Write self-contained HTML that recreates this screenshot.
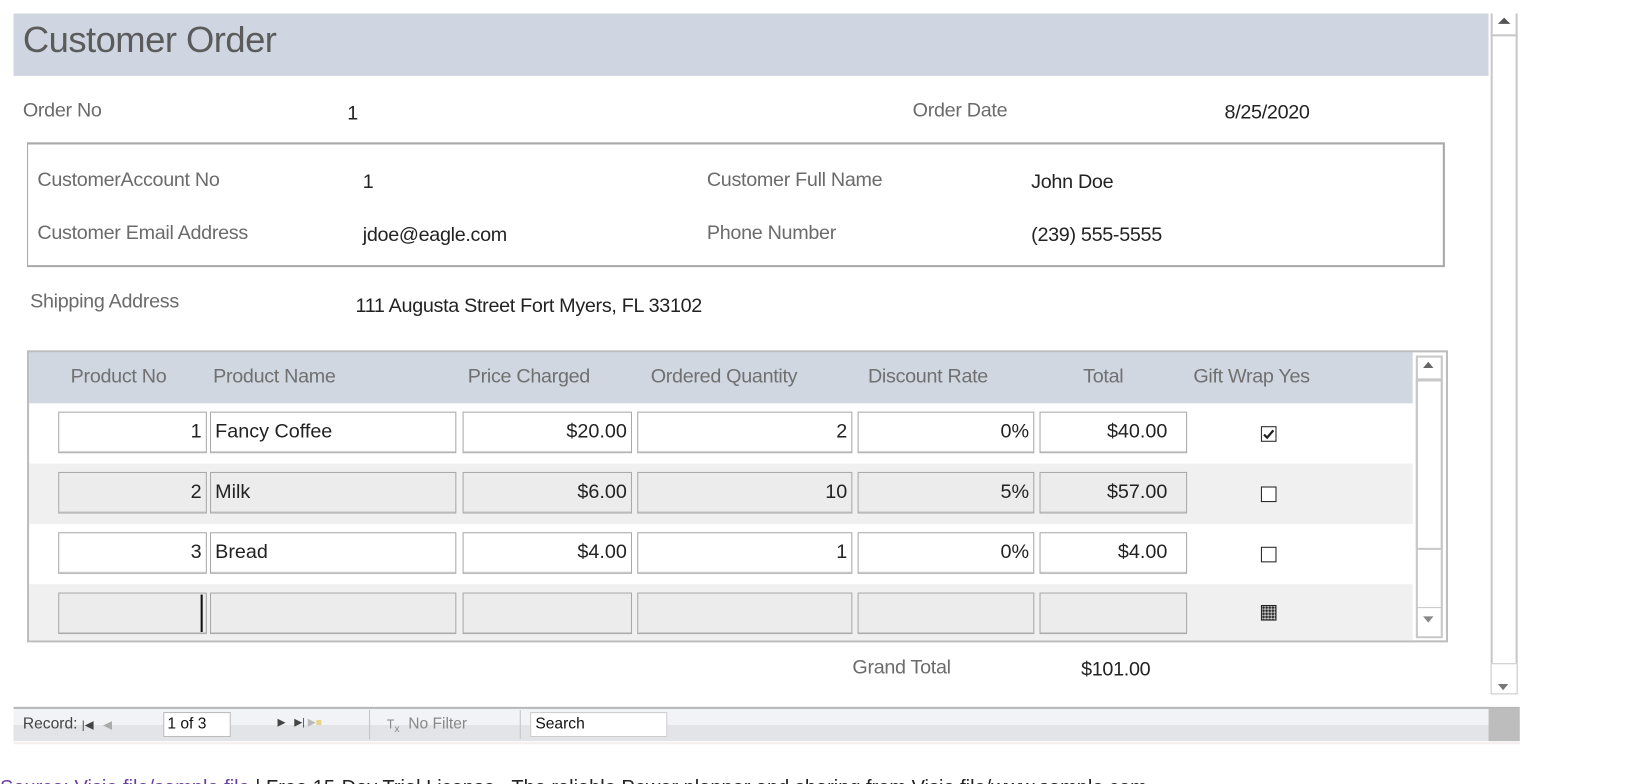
<!DOCTYPE html>
<html><head><meta charset="utf-8"><style>
body{margin:0;width:1630px;height:784px;overflow:hidden;background:#fff;font-family:"Liberation Sans",sans-serif;position:relative}
#w{position:absolute;left:0;top:0;width:1568px;height:754px;transform:scale(1.0395);transform-origin:0 0}
.a{position:absolute;white-space:nowrap}
.lbl{color:#6b6b6b;font-size:19px;letter-spacing:-0.3px}
.val{color:#222;font-size:19px;letter-spacing:-0.3px}
.hd{color:#707070;font-size:19px;letter-spacing:-0.3px}
.f{position:absolute;height:40px;border:1px solid #a9a9a9;box-shadow:inset 0 -1px 0 #ccc;box-sizing:border-box;font-size:19px;color:#222;line-height:38px;padding:0 4px}
.r{text-align:right}
.cb{position:absolute;width:13px;height:13px;border:1.5px solid #222;background:#fff}
</style></head><body>
<div id="w">
<div class="a" style="left:13px;top:13px;width:1419px;height:60px;background:#cfd6e1"></div>
<div class="a" style="left:22px;top:19px;font-size:35px;color:#5b5b5b;letter-spacing:-0.5px">Customer Order</div>
<div class="a" style="left:1434px;top:13px;width:26px;height:654px;border-left:2px solid #c8c8c8;border-right:2px solid #c8c8c8;box-sizing:border-box"></div>
<div class="a" style="left:1434px;top:33px;width:26px;border-top:2px solid #c8c8c8"></div>
<div class="a" style="left:1441px;top:17px;width:0;height:0;border-left:6px solid transparent;border-right:6px solid transparent;border-bottom:6px solid #555"></div>
<div class="a" style="left:1434px;top:638px;width:26px;height:30px;border:1px solid #c8c8c8;box-sizing:border-box;background:#fff"></div>
<div class="a" style="left:1441px;top:658px;width:0;height:0;border-left:5px solid transparent;border-right:5px solid transparent;border-top:6px solid #777"></div>

<div class="a lbl" style="left:22px;top:96px">Order No</div>
<div class="a val" style="left:334px;top:99px">1</div>
<div class="a lbl" style="left:878px;top:96px">Order Date</div>
<div class="a val" style="left:1178px;top:98px">8/25/2020</div>

<div class="a" style="left:26px;top:137px;width:1364px;height:120px;border:2px solid #a8a8a8;border-left-width:1px;box-sizing:border-box"></div>
<div class="a lbl" style="left:36px;top:163px">CustomerAccount No</div>
<div class="a val" style="left:349px;top:165px">1</div>
<div class="a lbl" style="left:680px;top:163px">Customer Full Name</div>
<div class="a val" style="left:992px;top:165px">John Doe</div>
<div class="a lbl" style="left:36px;top:214px">Customer Email Address</div>
<div class="a val" style="left:349px;top:216px">jdoe@eagle.com</div>
<div class="a lbl" style="left:680px;top:214px">Phone Number</div>
<div class="a val" style="left:992px;top:216px">(239) 555-5555</div>

<div class="a lbl" style="left:29px;top:280px">Shipping Address</div>
<div class="a val" style="left:342px;top:284px">111 Augusta Street Fort Myers, FL 33102</div>

<div class="a" style="left:26px;top:337px;width:1367px;height:281px;border:2px solid #bdbdbd;box-sizing:border-box"></div>
<div class="a" style="left:28px;top:339px;width:1331px;height:49px;background:#d0d7e1"></div>
<div class="a" style="left:28px;top:446px;width:1331px;height:58px;background:#f0f0f0"></div>
<div class="a" style="left:28px;top:562px;width:1331px;height:54px;background:#f0f0f0"></div>
<div class="a hd" style="left:68px;top:352px">Product No</div>
<div class="a hd" style="left:205px;top:352px">Product Name</div>
<div class="a hd" style="left:450px;top:352px">Price Charged</div>
<div class="a hd" style="left:626px;top:352px">Ordered Quantity</div>
<div class="a hd" style="left:835px;top:352px">Discount Rate</div>
<div class="a hd" style="left:1042px;top:352px">Total</div>
<div class="a hd" style="left:1148px;top:352px">Gift Wrap Yes</div>
<div class="a" style="left:1362px;top:342px;width:26px;height:272px;border:2px solid #c8c8c8;box-sizing:border-box;background:#fff"></div>
<div class="a" style="left:1362px;top:364px;width:26px;height:165px;border:2px solid #c8c8c8;border-top-width:3px;box-sizing:border-box"></div>
<div class="a" style="left:1369px;top:348px;width:0;height:0;border-left:5px solid transparent;border-right:5px solid transparent;border-bottom:6px solid #666"></div>
<div class="a" style="left:1362px;top:584px;width:26px;border-top:1px solid #c8c8c8"></div>
<div class="a" style="left:1369px;top:593px;width:0;height:0;border-left:5px solid transparent;border-right:5px solid transparent;border-top:6px solid #888"></div>

<div class="f r" style="left:56px;top:396px;width:143px;background:#fff">1</div>
<div class="f" style="left:202px;top:396px;width:237px;background:#fff">Fancy Coffee</div>
<div class="f r" style="left:445px;top:396px;width:163px;background:#fff">$20.00</div>
<div class="f r" style="left:613px;top:396px;width:207px;background:#fff">2</div>
<div class="f r" style="left:825px;top:396px;width:170px;background:#fff">0%</div>
<div class="f r" style="left:1000px;top:396px;width:142px;background:#fff;padding-right:18px">$40.00</div>
<div class="cb" style="left:1213px;top:410px"></div>
<svg class="a" style="left:1213px;top:410px" width="16" height="16"><path d="M3 8 L6 11 L12 4" stroke="#222" stroke-width="2.2" fill="none"/></svg>
<div class="f r" style="left:56px;top:454px;width:143px;background:#ececec">2</div>
<div class="f" style="left:202px;top:454px;width:237px;background:#ececec">Milk</div>
<div class="f r" style="left:445px;top:454px;width:163px;background:#ececec">$6.00</div>
<div class="f r" style="left:613px;top:454px;width:207px;background:#ececec">10</div>
<div class="f r" style="left:825px;top:454px;width:170px;background:#ececec">5%</div>
<div class="f r" style="left:1000px;top:454px;width:142px;background:#ececec;padding-right:18px">$57.00</div>
<div class="cb" style="left:1213px;top:468px"></div>
<div class="f r" style="left:56px;top:512px;width:143px;background:#fff">3</div>
<div class="f" style="left:202px;top:512px;width:237px;background:#fff">Bread</div>
<div class="f r" style="left:445px;top:512px;width:163px;background:#fff">$4.00</div>
<div class="f r" style="left:613px;top:512px;width:207px;background:#fff">1</div>
<div class="f r" style="left:825px;top:512px;width:170px;background:#fff">0%</div>
<div class="f r" style="left:1000px;top:512px;width:142px;background:#fff;padding-right:18px">$4.00</div>
<div class="cb" style="left:1213px;top:526px"></div>
<div class="f" style="left:56px;top:570px;width:143px;background:#ececec"></div>
<div class="a" style="left:193px;top:572px;width:2px;height:36px;background:#111"></div>
<div class="f" style="left:202px;top:570px;width:237px;background:#ececec"></div>
<div class="f" style="left:445px;top:570px;width:163px;background:#ececec"></div>
<div class="f" style="left:613px;top:570px;width:207px;background:#ececec"></div>
<div class="f" style="left:825px;top:570px;width:170px;background:#ececec"></div>
<div class="f" style="left:1000px;top:570px;width:142px;background:#ececec"></div>
<div class="cb" style="left:1213px;top:582px;background:radial-gradient(circle,#333 1px,#ccc 1.5px) 0 0/3px 3px"></div>

<div class="a lbl" style="left:820px;top:632px">Grand Total</div>
<div class="a val" style="left:1040px;top:634px">$101.00</div>

<div class="a" style="left:13px;top:680px;width:1449px;height:33px;background:linear-gradient(#f2f3f6 0,#f2f3f6 50%,#e2e4e8 50%,#e2e4e8 100%);border-top:2px solid #b8b8b8;box-sizing:border-box"></div>
<div class="a" style="left:1432px;top:682px;width:30px;height:31px;background:#bdbdbd"></div>
<div class="a" style="left:22px;top:688px;font-size:15px;color:#444">Record: <span style="font-size:11px">|◀ &nbsp;&nbsp;<span style="color:#aaa">◀</span></span></div>
<div class="a" style="left:157px;top:685px;width:60px;height:22px;background:#fff;border:1px solid #bbb;font-size:15px;line-height:22px;padding-left:3px;color:#111">1 of 3</div>
<div class="a" style="left:267px;top:690px;font-size:10px;color:#444">▶ &nbsp; ▶| <span style="color:#bbb">▶</span><span style="color:#e6d48a">■</span></div>
<div class="a" style="left:355px;top:683px;width:1px;height:28px;background:#c4c4c4"></div>
<div class="a" style="left:372px;top:688px;font-size:15px;color:#888"><span style="font-size:12px">T<sub>x</sub></span> &nbsp;No Filter</div>
<div class="a" style="left:500px;top:683px;width:1px;height:28px;background:#c4c4c4"></div>
<div class="a" style="left:510px;top:685px;width:126px;height:22px;background:#fff;border:1px solid #ccc;font-size:15px;line-height:22px;padding-left:4px;color:#111">Search</div>
<div class="a" style="left:13px;top:714px;width:1449px;height:2px;background:#f5eeee"></div>
</div>
<div class="a" style="left:0;top:776px;font-size:20px;color:#222;width:1630px;height:8px;overflow:hidden;line-height:24px"><span style="color:#6b3fa0">Source: Visio file/sample file</span> | Free 15-Day Trial License &nbsp; The reliable Power planner and sharing from Visio file/www.sample.com</div>
</body></html>
